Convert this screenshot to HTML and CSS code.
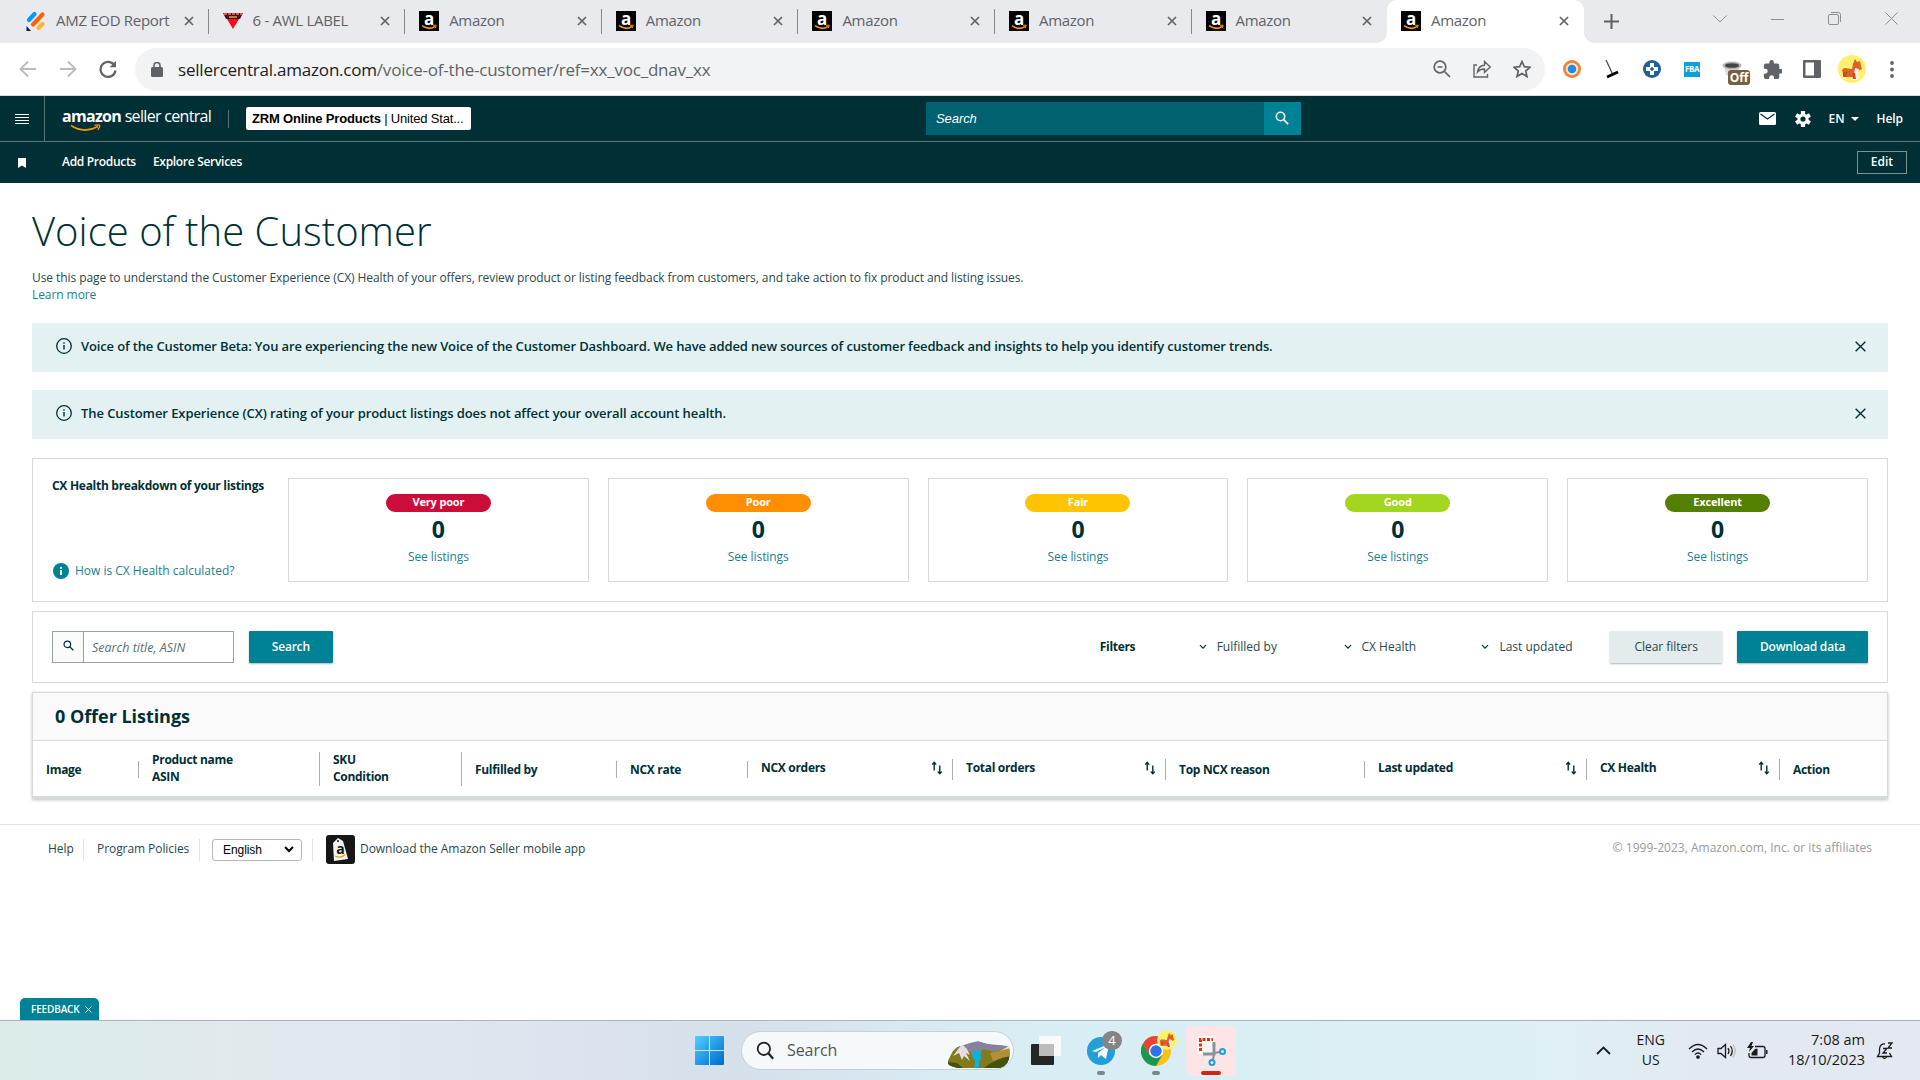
FILE: index.html
```html
<!doctype html>
<html lang="en">
  <head>
    <meta charset="utf-8" />
    <meta name="viewport" content="width=device-width, initial-scale=1" />
    <title>Voice of the Customer</title>
    <link rel="stylesheet" href="styles.css">
  </head>

  <body>
    <!-- shared icons -->
    <svg class="sprite" width="0" height="0">
      <symbol id="x" viewBox="0 0 10 10"><path d="M1 1l8 8M9 1l-8 8" fill="none" stroke="currentColor" stroke-width="1.7" /></symbol>
      <symbol id="x-thin" viewBox="0 0 12 12"><path d="M.7.7l10.6 10.6M11.3.7L.7 11.3" fill="none" stroke="currentColor" stroke-width="1.5" /></symbol>
      <symbol id="amz" viewBox="0 0 20 20">
        <rect width="20" height="20" />
        <text x="10" y="13.5" text-anchor="middle" class="amz-a">a</text>
        <path d="M3 14.7q7 5 13 .6" fill="none" stroke="#f90" stroke-width="1.6" />
        <path d="M14.2 14.4l3-.3-.8 2.8" fill="none" stroke="#f90" stroke-width="1" />
      </symbol>
      <symbol id="glass" viewBox="0 0 16 16"><circle cx="6.3" cy="6.3" r="4.8" fill="none" stroke="currentColor" stroke-width="1.8" /><path d="M10 10l5 5" stroke="currentColor" stroke-width="2" /></symbol>
      <symbol id="info" viewBox="0 0 16 16"><circle cx="8" cy="8" r="7.3" fill="none" stroke="#002f36" stroke-width="1.3" /><path d="M8 7v4.5M8 4.3v1.5" stroke="#002f36" stroke-width="1.4" /></symbol>
      <symbol id="chev" viewBox="0 0 8 6"><path d="M1 1.2l3 3 3-3" fill="none" stroke="#002f36" stroke-width="1.2" /></symbol>
      <symbol id="sort" viewBox="0 0 12 14"><path d="M3.2 9.500V1.500M1.200 3.600l2-2.200 2 2.200M8.800 4.500v8.200M6.800 10.600l2 2.200 2-2.200" fill="none" stroke="#002f36" stroke-width="1.400" /></symbol>
      <symbol id="corgi" viewBox="0 0 28 28">
        <circle cx="14" cy="14" r="14" fill="#fff16b" />
        <path d="M4 15l2-2 8 1 1-5 2-5 2 3 3-1 1 5 1 3-4 2-1 6H6z" fill="#e0602a" />
        <path d="M17 13l4 1-1 5 1 4-4 2-1-6z" fill="#fff5e6" />
        <path d="M5 17h4l-1 6H5zM14 18h3l1 6h-3z" fill="#c44f20" />
        <path d="M5 22h3v2H5zM15 24h4v1h-4z" fill="#fff" />
      </symbol>
    </svg>

    <!-- Browser tabs -->
    <div class="tabs">
      <div class="tab">
        <svg class="fav" viewBox="0 0 20 20"><g stroke-width="4.2" stroke-linecap="round"><path d="M3 9l5.500-6" stroke="#0099ff" /><path d="M7 13.500l9.500-10" stroke="#ff6100" /><path d="M12.500 17l4-4" stroke="#ffb629" /></g><path d="M.5 15l4.500 5H.5z" fill="#0a1551" /></svg>
        <span>AMZ EOD Report</span><svg class="close"><use href="#x" /></svg>
      </div>
      <div class="tab">
        <svg class="fav" viewBox="0 0 20 20"><path d="M0 2h20l-3 6H3z" fill="#3a1230" /><path d="M1 3h18" stroke="#e8553b" stroke-width="2" stroke-dasharray="3 1" /><path d="M6 6h8" stroke="#e8a33b" stroke-width="1.500" /><path d="M4 8h12l-6 10z" fill="#f0101c" /></svg>
        <span>6 - AWL LABEL</span><svg class="close"><use href="#x" /></svg>
      </div>
      <div class="tab"><svg class="fav"><use href="#amz" /></svg><span>Amazon</span><svg class="close"><use href="#x" /></svg></div>
      <div class="tab"><svg class="fav"><use href="#amz" /></svg><span>Amazon</span><svg class="close"><use href="#x" /></svg></div>
      <div class="tab"><svg class="fav"><use href="#amz" /></svg><span>Amazon</span><svg class="close"><use href="#x" /></svg></div>
      <div class="tab"><svg class="fav"><use href="#amz" /></svg><span>Amazon</span><svg class="close"><use href="#x" /></svg></div>
      <div class="tab last"><svg class="fav"><use href="#amz" /></svg><span>Amazon</span><svg class="close"><use href="#x" /></svg></div>
      <div class="tab active"><svg class="fav"><use href="#amz" /></svg><span>Amazon</span><svg class="close"><use href="#x" /></svg></div>
      <svg class="plus" viewBox="0 0 16 16"><path d="M8 0v16M0 8h16" stroke="#5f6368" stroke-width="2.2" /></svg>
      <div class="win-buttons">
        <svg width="14" height="8" viewBox="0 0 14 8"><path d="M.5.500l6.500 6.500 6.500-6.500" /></svg>
        <svg width="13" height="8" viewBox="0 0 13 8"><path d="M0 4.500h13" /></svg>
        <svg width="13" height="13" viewBox="0 0 13 13"><rect x=".5" y="2.500" width="10" height="10" rx="1.500" /><path d="M3 .5h7.500q2 0 2 2V10" /></svg>
        <svg width="13" height="13" viewBox="0 0 13 13"><path d="M.5.500l12 12M12.500.500l-12 12" /></svg>
      </div>
    </div>

    <!-- Address bar -->
    <div class="toolbar">
      <svg class="nav-icon dim" viewBox="0 0 18 18"><path d="M17 9H2M9 1.500L1.500 9 9 16.500" /></svg>
      <svg class="nav-icon dim" viewBox="0 0 18 18"><path d="M1 9h15M9 1.500L16.500 9 9 16.500" /></svg>
      <svg class="nav-icon" viewBox="0 0 18 18"><path d="M15.500 5.500A7.500 7.500 0 1 0 16.500 10.500" stroke-width="2.200" /><path d="M17 .800v6.400h-6.400z" fill="#5f6368" stroke="none" /></svg>
      <div class="omnibox">
        <svg class="lock" viewBox="0 0 12 15"><rect y="5" width="12" height="10" rx="1.500" fill="#5f6368" /><path d="M3 6V3.500a3 3 0 0 1 6 0V6" fill="none" stroke="#5f6368" stroke-width="1.600" /></svg>
        <span class="url">sellercentral.amazon.com<i>/voice-of-the-customer/ref=xx_voc_dnav_xx</i></span>
        <svg class="box-icon" viewBox="0 0 18 18"><circle cx="7" cy="7" r="5.800" /><path d="M11.500 11.500L17 17M4.500 7h5" /></svg>
        <svg class="box-icon" viewBox="0 0 18 18"><path d="M4 5H1v12h13.500v-3M4.500 12q1-6.500 7-6.800V1.500L17.300 7l-5.800 5.300V9q-4.500-.2-7 3z" stroke-width="1.400" /></svg>
        <svg class="box-icon" viewBox="0 0 18 18"><path d="M9 1.500l2.300 5.200 5.700.5-4.300 3.800 1.300 5.600L9 13.600l-5 3 1.300-5.600L1 7.200l5.700-.5z" /></svg>
      </div>
      <div class="extensions">
        <svg width="18" height="18" viewBox="0 0 18 18"><circle cx="9" cy="9" r="9" fill="#f08336" /><circle cx="9" cy="9" r="6.200" fill="#fde3cb" /><circle cx="9" cy="9" r="4.300" fill="#1a8fe8" /></svg>
        <svg width="15" height="20" viewBox="0 0 15 20"><path d="M1 1l7 15" stroke="#444" stroke-width="1.200" /><path d="M2 18l11-5" stroke="#000" stroke-width="3" /></svg>
        <svg width="18" height="18" viewBox="0 0 18 18"><circle cx="9" cy="9" r="9" fill="#20609a" /><path d="M7 3h4v4h4v4h-4v4H7v-4H3V7h4z" fill="#fff" /><path d="M9 7v4M7 9h4" stroke="#20609a" stroke-width="1.500" /></svg>
        <div class="fba">FBA</div>
        <div class="off-ext"><svg width="20" height="16" viewBox="0 0 20 16"><path d="M2 5l2 9q6 3 12 0l2-9z" fill="#ddd" /><ellipse cx="10" cy="4.500" rx="9.500" ry="4" fill="#b4b4b4" /><ellipse cx="10" cy="4.500" rx="7" ry="2.300" fill="#444" /></svg><b>Off</b></div>
        <svg width="19" height="19" viewBox="1 1 21 21"><path fill="#5f6368" d="M20.500 11H19V7a2 2 0 0 0-2-2h-4V3.500a2.500 2.500 0 0 0-5 0V5H4a2 2 0 0 0-2 2v3.800h1.500a2.700 2.700 0 0 1 0 5.400H2V20a2 2 0 0 0 2 2h3.800v-1.500a2.700 2.700 0 0 1 5.400 0V22H17a2 2 0 0 0 2-2v-4h1.500a2.500 2.500 0 0 0 0-5z" /></svg>
        <svg width="18" height="18" viewBox="0 0 18 18"><rect width="18" height="18" rx="1" fill="#5f6368" /><rect x="2.500" y="2.500" width="8.500" height="13" fill="#fff" /></svg>
        <svg width="28" height="28"><use href="#corgi" /></svg>
        <svg width="4" height="17" viewBox="0 0 4 17" fill="#5f6368"><circle cx="2" cy="2" r="1.900" /><circle cx="2" cy="8.500" r="1.900" /><circle cx="2" cy="15" r="1.900" /></svg>
      </div>
    </div>

    <header>
      <div class="header-top">
        <div class="menu"><svg width="14" height="11" viewBox="0 0 14 11"><path d="M0 1.500h14M0 4.500h14M0 7.500h14M0 10.500h14" stroke="#fff" /></svg></div>
        <div class="logo"><b>amazon</b> seller central
          <svg class="smile" viewBox="0 0 31 8"><path d="M1 1.500q13 8.500 27 1" fill="none" stroke="#f90" stroke-width="1.700" /><path d="M24.500 1.300q4-1 5 0t-1.700 4.500" fill="none" stroke="#f90" stroke-width="1.300" /></svg>
        </div>
        <div class="account"><b>ZRM Online Products</b> | United Stat...</div>
        <div class="site-search"><span>Search</span><div class="go"><svg width="14" height="14"><use href="#glass" /></svg></div></div>
        <div class="header-right">
          <svg width="17" height="13" viewBox="0 0 17 13"><rect width="17" height="13" rx="1.500" fill="#fff" /><path d="M1.500 2l7 5 7-5" fill="none" stroke="#002f36" stroke-width="1.300" /></svg>
          <svg class="gear" width="16" height="16" viewBox="0 0 16 16"><g stroke="#fff" stroke-width="4.200"><path d="M8 0v16M1.100 4l13.800 8M1.100 12L14.900 4" /></g><circle cx="8" cy="8" r="5.600" fill="#fff" /><circle cx="8" cy="8" r="2.600" fill="#002f36" /></svg>
          <span class="lang">EN<svg width="8" height="4" viewBox="0 0 8 4"><path d="M0 0h8L4 4z" fill="#fff" /></svg></span>
          <span>Help</span>
        </div>
      </div>
      <div class="header-sub">
        <svg class="bookmark" width="8" height="10" viewBox="0 0 8 10"><path d="M0 0h8v10L4 7.500 0 10z" fill="#fff" /></svg>
        <span>Add Products</span>
        <span>Explore Services</span>
        <button class="edit">Edit</button>
      </div>
    </header>

    <main>
      <h1>Voice of the Customer</h1>
      <p class="intro">Use this page to understand the Customer Experience (CX) Health of your offers, review product or listing feedback from customers, and take action to fix product and listing issues.<br><a>Learn more</a></p>

      <div class="alert beta"><svg width="16" height="16"><use href="#info" /></svg><span>Voice of the Customer Beta: You are experiencing the new Voice of the Customer Dashboard. We have added new sources of customer feedback and insights to help you identify customer trends.</span><svg class="dismiss"><use href="#x-thin" /></svg></div>
      <div class="alert"><svg width="16" height="16"><use href="#info" /></svg><span>The Customer Experience (CX) rating of your product listings does not affect your overall account health.</span><svg class="dismiss"><use href="#x-thin" /></svg></div>

      <section class="health">
        <div class="health-intro">
          <h4>CX Health breakdown of your listings</h4>
          <a><svg width="16" height="16" viewBox="0 0 16 16"><circle cx="8" cy="8" r="8" fill="#008296" /><path d="M8 7v5M8 4v1.800" stroke="#fff" stroke-width="2" /></svg>How is CX Health calculated?</a>
        </div>
        <div class="card"><span class="badge very-poor">Very poor</span><strong>0</strong><a>See listings</a></div>
        <div class="card"><span class="badge poor">Poor</span><strong>0</strong><a>See listings</a></div>
        <div class="card"><span class="badge fair">Fair</span><strong>0</strong><a>See listings</a></div>
        <div class="card"><span class="badge good">Good</span><strong>0</strong><a>See listings</a></div>
        <div class="card"><span class="badge excellent">Excellent</span><strong>0</strong><a>See listings</a></div>
      </section>

      <section class="filters">
        <div class="search-box"><div class="search-icon"><svg width="11" height="11"><use href="#glass" /></svg></div><span>Search title, ASIN</span></div>
        <button class="btn search-btn">Search</button>
        <b class="filters-label">Filters</b>
        <div class="drop fulfilled"><svg width="8" height="6"><use href="#chev" /></svg>Fulfilled by</div>
        <div class="drop cx"><svg width="8" height="6"><use href="#chev" /></svg>CX Health</div>
        <div class="drop updated"><svg width="8" height="6"><use href="#chev" /></svg>Last updated</div>
        <button class="btn secondary">Clear filters</button>
        <button class="btn download">Download data</button>
      </section>

      <section class="listings">
        <h2>0 Offer Listings</h2>
        <div class="columns">
          <div class="col">Image</div>
          <div class="col two">Product name<br>ASIN</div>
          <div class="col two">SKU<br>Condition</div>
          <div class="col">Fulfilled by</div>
          <div class="col">NCX rate</div>
          <div class="col sortable">NCX orders<svg><use href="#sort" /></svg></div>
          <div class="col sortable">Total orders<svg><use href="#sort" /></svg></div>
          <div class="col">Top NCX reason</div>
          <div class="col sortable">Last updated<svg><use href="#sort" /></svg></div>
          <div class="col sortable">CX Health<svg><use href="#sort" /></svg></div>
          <div class="col end">Action</div>
        </div>
      </section>
    </main>

    <footer>
      <span class="foot-help">Help</span>
      <span class="foot-policies">Program Policies</span>
      <div class="foot-lang"><div class="select">English<svg width="10" height="7" viewBox="0 0 10 7"><path d="M1 1l4 4 4-4" fill="none" stroke="#000" stroke-width="2" /></svg></div></div>
      <svg class="app-icon" viewBox="0 0 29 29"><rect width="29" height="29" rx="3" fill="#161616" /><path d="M7 8l5-5 5 3 5 18-14 2z" fill="#f4f4f4" /><circle cx="12" cy="6" r="1" fill="#161616" /><text x="14.500" y="19" text-anchor="middle" class="tag-a">a</text><path d="M9 21q6 3 10-1.500" fill="none" stroke="#f90" stroke-width="1.300" /></svg>
      <span class="app">Download the Amazon Seller mobile app</span>
      <span class="copyright">© 1999-2023, Amazon.com, Inc. or its affiliates</span>
    </footer>

    <div class="feedback">FEEDBACK<svg width="7" height="7"><use href="#x-thin" /></svg></div>

    <!-- Windows taskbar -->
    <div class="taskbar">
      <svg class="start" viewBox="0 0 29 29"><defs><linearGradient id="win" x2="1" y2="1"><stop stop-color="#4fd0ff" /><stop offset="1" stop-color="#0067cf" /></linearGradient></defs><path d="M1 0h13v14H0V1q0-1 1-1zM15 0h13q1 0 1 1v13H15zM0 15h14v14H1q-1 0-1-1zM15 15h14v13q0 1-1 1H15z" fill="url(#win)" /></svg>
      <div class="task-search">
        <svg width="18" height="19" viewBox="0 0 16 16"><circle cx="7" cy="6.500" r="5.500" fill="none" stroke="#222" stroke-width="1.600" /><path d="M11 10.500l4.200 4.800" stroke="#222" stroke-width="2" /></svg>
        <span>Search</span>
        <svg class="scene" viewBox="0 0 63 27">
          <defs><clipPath id="hill"><path d="M5 10Q12 2 20 2l10-2 12 3q14 0 19 3 3 18-9 21H10Q-2 25 0 20z" /></clipPath></defs>
          <g clip-path="url(#hill)">
            <path d="M0 9l22-7 8-2 10 3 23 2v22H0z" fill="#85839c" />
            <path d="M0 27V14l12-9 10 6 5 6v10zM24 14l12-6 10 3 17-6v22H28z" fill="#837a1c" />
            <path d="M5 15L14 3l5 5 3 6-4-2 4 8-6-5-2 4-3-7zM44 14L63 4v5l-12 5z" fill="#e8dede" />
            <path d="M42 12l21-5v8l-18 5z" fill="#b08f35" />
            <path d="M0 27v-6l9 1 6 5zM36 27q12-10 27-12v12z" fill="#42530e" />
            <path d="M25 10h9q-3 4 0 7-4 2-3 10h-5q3-8-2-11z" fill="#06b4dd" />
          </g>
        </svg>
      </div>
      <svg class="task-view" viewBox="0 0 30 29"><rect y="8" width="23" height="21" rx="1" fill="#262626" /><rect x="8" width="22" height="20" rx="1" fill="#fafafa" /><rect x="8" y="8" width="15" height="12" fill="#bcbcbc" /></svg>
      <div class="app-slot telegram">
        <svg width="28" height="28" viewBox="0 0 28 28"><circle cx="14" cy="14" r="14" fill="#229ed9" /><path d="M5 14l17-7-3 15-5-4-3 3v-5l8-6-10 5z" fill="#fff" /></svg>
        <b>4</b><i></i>
      </div>
      <div class="app-slot chrome">
        <svg width="30" height="30" viewBox="0 0 30 30"><circle cx="15" cy="15" r="15" fill="#fbc116" /><path d="M2 7.500A15 15 0 0 1 28 7.500H15L8.500 18.700z" fill="#ea4335" /><path d="M2 7.500A15 15 0 0 0 15 30l6.500-11.300h-13z" fill="#1a9850" /><circle cx="15" cy="15" r="7.200" fill="#fff" /><circle cx="15" cy="15" r="5.700" fill="#2b73e8" /></svg>
        <svg class="profile"><use href="#corgi" /></svg><i></i>
      </div>
      <div class="app-slot snip">
        <svg width="31" height="30" viewBox="0 0 31 30"><rect x="1" width="19" height="18" rx="2" fill="#fff" opacity=".6" /><path d="M4.500 15V3.500H17" fill="none" stroke="#d83b01" stroke-width="3" stroke-dasharray="3 1.500" /><path d="M18 6v12H7" fill="none" stroke="#8b929a" stroke-width="3" /><path d="M18 17l6-1M18 18l-1 6" stroke="#8b929a" stroke-width="2" /><circle cx="26.500" cy="15.500" r="2.500" fill="none" stroke="#1ba0e2" stroke-width="2" /><circle cx="16" cy="26.500" r="2.500" fill="none" stroke="#1ba0e2" stroke-width="2" /></svg>
        <i></i>
      </div>
      <div class="tray">
        <svg width="15" height="9" viewBox="0 0 15 9"><path d="M1 8l6.500-6.500L14 8" stroke-width="1.800" /></svg>
        <div class="tray-lang">ENG<br>US</div>
        <svg width="20" height="16" viewBox="0 0 20 16"><path d="M1 6q9-9 18 0M4 9q6-6 12 0M6.800 11.600q3.200-3.200 6.400 0" /><circle cx="10" cy="14" r="1.200" fill="#1b1b1b" /></svg>
        <svg class="sound" width="20" height="16" viewBox="0 0 20 16"><path d="M1 5.500h3L8.500 1.500v13L4 10.500H1zM11 5q2 3 0 6M13.500 3q3.500 5 0 10" /><path d="M16 1.500q4.500 6.500 0 13" stroke="#bbb" /></svg>
        <svg class="battery" width="21" height="17" viewBox="0 0 21 17"><path d="M8 4.500h8q2 0 2 2v7q0 2-2 2H4q-2 0-2-2V11" /><path d="M4.500 13.500h6v-7L8 7l-3.500 4zM19 8h1.500v4H19zM4 0L0 6h3L2 10l5-6H4.500L6 0z" fill="#1b1b1b" stroke="none" /></svg>
        <div class="clock">7:08 am<br>18/10/2023</div>
        <svg class="bell" width="18" height="18" viewBox="0 0 18 18"><path d="M9 2Q4 1.500 3.500 7v4L1.500 14.500h14L13.500 11M6.500 15q2 3 4 0M7 6.500h4L7 11h4M12 1h4l-4 5h4" /></svg>
      </div>
    </div>
  </body>
</html>
```
FILE: styles.css
```css
* {
  box-sizing: border-box;
}

body {
  margin: 0;
  width: 1920px;
  height: 1080px;
  overflow: hidden;
  display: flex;
  flex-direction: column;
  background: #fff;
  font-family: "Open Sans", sans-serif;
  font-size: 12px;
  line-height: 17px;
  letter-spacing: -0.07px;
  color: #002f36;
  white-space: nowrap;
}

svg {
  display: block;
  flex: none;
}

.sprite {
  display: none;
}

i {
  font-style: normal;
}

a {
  color: #1a7f92;
}

.amz-a {
  font: bold 17px "Open Sans", sans-serif;
  fill: #fff;
}

/* Browser tabs */
.tabs {
  display: flex;
  align-items: center;
  height: 43px;
  padding-left: 12px;
  background: #e8eaed;
  color: #5f6368;
}

.tab {
  display: flex;
  align-items: center;
  width: 196.6px;
  height: 25px;
  padding: 0 14px 2px 14px;
  border-right: 1px solid #85888d;
  font-size: 15px;
  letter-spacing: -0.3px;
}

.tab span {
  flex: 1;
  margin-left: 10px;
}

.tab.last {
  width: 195.4px;
  border-color: transparent;
}

.tab.active {
  position: relative;
  width: 197px;
  height: 43px;
  padding: 0 15px 2px 14px;
  border: none;
  border-radius: 10px 10px 0 0;
  background: #fff;
}

/* curved feet of the active tab */
.tab.active::before,
.tab.active::after {
  content: "";
  position: absolute;
  bottom: 0;
  width: 10px;
  height: 10px;
}

.tab.active::before {
  left: -10px;
  background: radial-gradient(circle at 0 0, transparent 9.5px, #fff 10px);
}

.tab.active::after {
  right: -10px;
  background: radial-gradient(circle at 100% 0, transparent 9.5px, #fff 10px);
}

.fav {
  width: 20px;
  height: 20px;
}

.close {
  width: 10px;
  height: 10px;
}

.plus {
  width: 15px;
  height: 15px;
  margin-left: 20px;
}

.win-buttons {
  display: flex;
  align-items: center;
  gap: 44px;
  margin: -6px 22px 0 auto;
}

.win-buttons svg {
  fill: none;
  stroke: #8b8e92;
}

/* Address bar */
.toolbar {
  display: flex;
  align-items: center;
  height: 53px;
  padding-left: 19px;
  border-bottom: 1px solid #dadce0;
}

.nav-icon {
  width: 18px;
  height: 18px;
  margin-right: 22px;
  fill: none;
  stroke: #5f6368;
  stroke-width: 1.8;
}

.nav-icon.dim {
  stroke: #b9bbbe;
}

.omnibox {
  display: flex;
  align-items: center;
  gap: 22px;
  width: 1410px;
  height: 43px;
  margin-left: -4px;
  padding: 0 14px 0 16px;
  border-radius: 22px;
  background: #f1f3f4;
  font-size: 17px;
  letter-spacing: -0.21px;
  line-height: 24px;
}

.lock {
  width: 12px;
  height: 15px;
  margin-right: -7px;
}

.url {
  flex: 1;
  padding-top: 1px;
  color: #202124;
}

.url i {
  color: #5f6368;
}

.box-icon {
  width: 18px;
  height: 18px;
  fill: none;
  stroke: #5f6368;
  stroke-width: 1.7;
}

.extensions {
  display: grid;
  grid-template-columns: repeat(9, 40px);
  align-items: center;
  justify-items: center;
  margin-left: 7px;
}

.fba {
  width: 16px;
  height: 15px;
  background: #0e9fdc;
  color: #fff;
  font-size: 8px;
  font-weight: 700;
  line-height: 14px;
  letter-spacing: -0.4px;
  text-align: center;
}

.off-ext {
  position: relative;
  width: 20px;
}

.off-ext b {
  position: absolute;
  left: 6px;
  top: 9px;
  width: 22px;
  height: 15px;
  border-radius: 3px;
  background: #77603c;
  color: #fff;
  font-size: 12px;
  line-height: 15px;
  text-align: center;
}

/* Seller Central header */
header {
  height: 87px;
  background: #002f36;
  color: #fff;
  font-weight: 600;
}

.header-top {
  display: flex;
  align-items: center;
  height: 46px;
  border-bottom: 1px solid #597478;
}

.menu {
  display: flex;
  align-items: center;
  width: 45px;
  height: 45px;
  padding-left: 15px;
  border-right: 1px solid #597478;
}

.logo {
  position: relative;
  width: 167px;
  height: 18px;
  margin: 0 17px;
  padding-bottom: 4px;
  border-right: 1px solid #597478;
  font-size: 16px;
  font-weight: 400;
  line-height: 13px;
  letter-spacing: -0.68px;
}

.smile {
  position: absolute;
  left: 8px;
  top: 14px;
  width: 31px;
  height: 8px;
}

.account {
  width: 225px;
  height: 23px;
  margin-right: 455px;
  padding-left: 6px;
  border-radius: 2px;
  background: #fff;
  color: #000;
  font-family: "Liberation Sans", sans-serif;
  font-size: 13px;
  font-weight: 400;
  line-height: 23px;
  letter-spacing: -0.18px;
}

.site-search {
  display: flex;
  width: 375px;
  height: 33px;
  background: #006170;
  font-family: "Liberation Sans", sans-serif;
  font-size: 13px;
  font-style: italic;
  font-weight: 400;
  line-height: 33px;
}

.site-search span {
  flex: 1;
  padding-left: 10px;
}

.go {
  display: flex;
  align-items: center;
  justify-content: center;
  width: 37px;
  padding: 0 1px 1px 0;
  background: #008296;
}

.header-right {
  display: flex;
  align-items: center;
  margin: 0 17px 0 auto;
}

.gear {
  margin: 0 18px 0 19px;
}

.lang {
  display: flex;
  align-items: center;
  gap: 6px;
  margin-right: 18px;
}

.header-sub {
  display: flex;
  align-items: center;
  height: 41px;
  padding: 0 13px 0 18px;
  letter-spacing: -0.3px;
}

.bookmark {
  margin-right: 36px;
}

.header-sub span {
  margin: -2px 17px 0 0;
}

.edit {
  width: 50px;
  height: 23px;
  margin-left: auto;
  padding: 0 0 2px;
  border: 1px solid #7d9093;
  background: none;
  color: #fff;
  font: inherit;
}

/* Page */
main {
  padding: 0 32px;
}

h1 {
  margin: 21px 0 19px;
  font-size: 40px;
  font-weight: 300;
  line-height: 54px;
  letter-spacing: 0.03px;
}

.intro {
  margin: -8px 0 20px;
  color: #28484e;
  letter-spacing: -0.075px;
}

.alert {
  display: flex;
  align-items: center;
  height: 49px;
  margin-bottom: 18px;
  padding: 0 22px 3px 24px;
  background: #e3f1f2;
  font-size: 13px;
  font-weight: 600;
  letter-spacing: -0.085px;
}

.alert.beta {
  letter-spacing: -0.14px;
}

.alert span {
  flex: 1;
  margin-left: 9px;
}

.dismiss {
  width: 11px;
  height: 11px;
}

.health {
  display: flex;
  gap: 19px;
  height: 144px;
  margin: 19px 0 9px;
  padding: 19px;
  border: 1px solid #d5dbdb;
}

.health-intro {
  display: flex;
  flex-direction: column;
  justify-content: space-between;
  width: 217px;
  height: 101px;
}

h4 {
  margin: 0;
  font-size: 12px;
  line-height: 15px;
  letter-spacing: -0.28px;
}

.health-intro a {
  display: flex;
  align-items: center;
  gap: 6px;
  padding-left: 1px;
  letter-spacing: -0.01px;
}

.card {
  flex: 1;
  display: flex;
  flex-direction: column;
  align-items: center;
  height: 104px;
  padding-top: 15px;
  border: 1px solid #d5dbdb;
}

.badge {
  width: 105px;
  height: 18px;
  border-radius: 9px;
  color: #fff;
  font-size: 11px;
  font-weight: 700;
  line-height: 16px;
  letter-spacing: -0.15px;
  text-align: center;
}

.very-poor { background: #cc0c39; }
.poor { background: #ff8f00; }
.fair { background: #ffc400; }
.good { background: #a2d61f; }
.excellent { background: #538000; }

.card strong {
  margin: 2px 0 4px;
  font-size: 23px;
  font-weight: 700;
  line-height: 30px;
}

.filters {
  display: flex;
  align-items: center;
  height: 72px;
  margin-bottom: 9px;
  padding: 0 19px;
  border: 1px solid #d5dbdb;
}

.search-box {
  display: flex;
  width: 182px;
  height: 32px;
  border: 1px solid #95a5a6;
  color: #5b6f73;
  font-size: 12.5px;
  font-style: italic;
  line-height: 32px;
  letter-spacing: 0;
}

.search-icon {
  display: flex;
  justify-content: center;
  width: 31px;
  margin-right: 8px;
  padding-top: 8px;
  border-right: 1px solid #95a5a6;
  background: #fafafa;
  color: #002f36;
}

.btn {
  height: 32px;
  padding: 0 0 1px;
  border: none;
  border-radius: 1px;
  background: #008296;
  box-shadow: 0 1px 2px rgba(0, 0, 0, 0.3);
  color: #fff;
  font: inherit;
  font-weight: 600;
  letter-spacing: -0.2px;
}

.search-btn {
  width: 84px;
  margin-left: 15px;
}

.filters-label {
  width: 99px;
  margin-left: 767px;
  padding-bottom: 2px;
  font-weight: 700;
  letter-spacing: -0.3px;
}

.drop {
  display: flex;
  align-items: center;
  gap: 10px;
  padding-bottom: 1px;
  color: #28484e;
  letter-spacing: 0;
}

.fulfilled { width: 145px; }
.cx { width: 138px; }
.updated { width: 129px; }

.btn.secondary {
  width: 112px;
  margin-right: 15px;
  background: #e3ebec;
  color: #28484e;
  font-weight: 400;
  letter-spacing: -0.03px;
}

.download {
  width: 131px;
}

.listings {
  height: 107px;
  border: 1px solid #d5dbdb;
  border-bottom-width: 3px;
  box-shadow: 0 1px 3px rgba(0, 0, 0, 0.25);
}

h2 {
  height: 48px;
  margin: 0;
  padding-left: 22px;
  border-bottom: 1px solid #d5dbdb;
  background: #fafafa;
  font-size: 18px;
  font-weight: 700;
  line-height: 47px;
  letter-spacing: -0.04px;
}

.columns {
  display: grid;
  grid-template-columns: 106px 181px 142px 155px 131px 205px 213px 199px 222px 193px 1fr;
  align-items: center;
  height: 56px;
  font-weight: 700;
  letter-spacing: -0.3px;
}

.col {
  height: 17px;
  padding-left: 13px;
  border-right: 1px solid #a3b1b3;
}

.col.two {
  height: 34px;
  line-height: 16.5px;
}

.col.sortable {
  display: flex;
  justify-content: space-between;
  height: 21px;
  padding-right: 9px;
}

.col svg {
  width: 12px;
  height: 14px;
  margin-top: 2px;
}

.col.end {
  border: none;
}

footer {
  display: flex;
  align-items: center;
  height: 50px;
  margin-top: 25px;
  padding: 0 48px;
  border-top: 1px solid #e1e4e4;
  color: #28484e;
}

.foot-help,
.foot-policies,
.foot-lang {
  height: 22px;
  line-height: 20px;
  border-right: 1px solid #dfe3e3;
}

.foot-help { width: 36px; }
.foot-policies { width: 116px; padding-left: 13px; }
.foot-lang { width: 113px; padding-left: 12px; }

.select {
  display: flex;
  align-items: center;
  justify-content: space-between;
  width: 90px;
  height: 22px;
  padding: 0 7px 0 10px;
  border: 1px solid #b9b9b9;
  border-radius: 3px;
  color: #000;
  font-family: "Liberation Sans", sans-serif;
}

.app-icon {
  width: 29px;
  height: 29px;
  margin: 0 5px 0 13px;
}

.app {
  padding-bottom: 2px;
  letter-spacing: -0.05px;
}

.tag-a {
  font: bold 14px "Open Sans", sans-serif;
  fill: #111;
}

.copyright {
  margin-left: auto;
  padding-bottom: 5px;
  color: #999;
  letter-spacing: 0.02px;
}

.feedback {
  display: flex;
  align-items: center;
  gap: 5px;
  width: 79px;
  height: 22px;
  margin: auto 0 0 20px;
  padding-left: 11px;
  border-radius: 5px 5px 0 0;
  background: #008296;
  color: #fff;
  font-size: 10px;
  font-weight: 600;
  line-height: 18px;
  letter-spacing: -0.15px;
}

/* Taskbar */
.taskbar {
  display: flex;
  align-items: center;
  height: 60px;
  padding: 0 26px 0 695px;
  border-top: 1px solid #a9b5b9;
  background: linear-gradient(90deg, #dbeceb 0, #e2e9ee 280px, #dce4ef 560px, #d5e0eb 740px, #d8ecf4 960px, #d9eff4 1240px, #dfeff4 1560px, #e2eaf1 1700px, #e3e8f1 100%);
  color: #1b1b1b;
}

.start {
  width: 29px;
  height: 29px;
}

.task-search {
  display: flex;
  align-items: center;
  width: 273px;
  height: 39px;
  margin: 0 17px;
  padding: 0 2px 0 14px;
  border: 1px solid #c5d0d8;
  border-radius: 20px;
  background: #f5f9fb;
  color: #555;
  font-size: 16px;
}

.task-search span {
  flex: 1;
  margin-left: 13px;
}

.scene {
  width: 63px;
  height: 27px;
  margin-top: 7px;
}

.task-view {
  width: 30px;
  height: 29px;
}

.app-slot {
  position: relative;
  display: flex;
  align-items: center;
  justify-content: center;
  height: 50px;
}

.telegram {
  width: 28px;
  margin-left: 26px;
}

.chrome {
  width: 30px;
  margin: 0 15px 0 26px;
}

.snip {
  width: 50px;
  border-radius: 5px;
  background: #fce4e7;
}

.app-slot i {
  position: absolute;
  bottom: 1px;
  left: calc(50% - 4px);
  width: 8px;
  height: 4px;
  border-radius: 2px;
  background: #7f868a;
}

.snip i {
  left: 15px;
  width: 20px;
  background: #c42b1c;
}

.telegram b {
  position: absolute;
  left: 15px;
  top: 5px;
  width: 20px;
  height: 19px;
  border-radius: 10px;
  background: #858585;
  color: #fff;
  font-size: 13px;
  font-weight: 400;
  line-height: 19px;
  text-align: center;
}

.profile {
  position: absolute;
  left: 16px;
  top: 4px;
  width: 20px;
  height: 20px;
}

.tray {
  display: flex;
  align-items: center;
  margin-left: auto;
  font-size: 14.5px;
  line-height: 20px;
  letter-spacing: 0;
}

.tray svg {
  fill: none;
  stroke: #1b1b1b;
  stroke-width: 1.3;
}

.tray-lang {
  margin: -2px 23px 0 26px;
  font-size: 14px;
  text-align: center;
}

.tray .sound {
  margin: 0 10px 0 9px;
}

.clock {
  width: 97px;
  margin: -2px 11px 0 0;
  text-align: right;
}
```
